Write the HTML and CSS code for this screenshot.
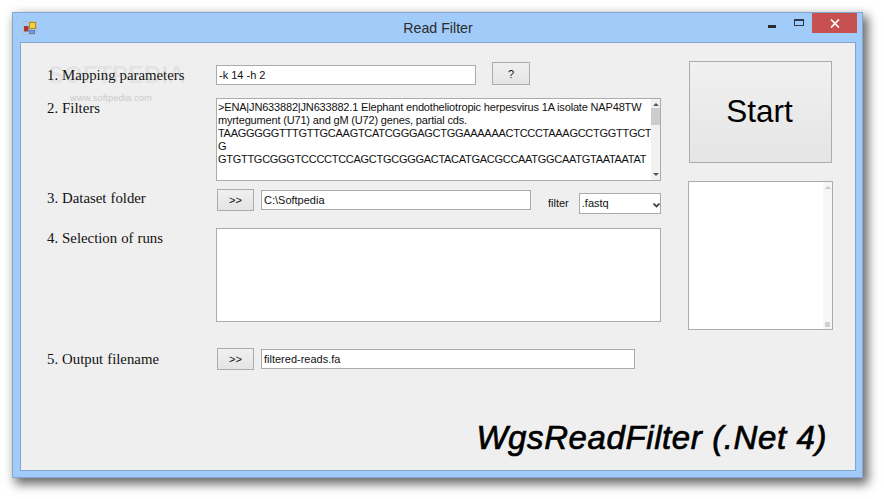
FILE: index.html
```html
<!DOCTYPE html>
<html lang="en">
<head>
    <meta charset="UTF-8">
    <title>Read Filter</title>
    <link rel="stylesheet" href="styles.css">
</head>
<body>

    <div class="window">
        <!-- Title bar -->
        <div class="titlebar">
            <svg class="app-icon" width="14" height="14" viewBox="0 0 14 14">
                <path d="M0.5 13.5 V0.5 H13.5 V13.5 Z" fill="none" stroke="#b4bcc6"/>
                <rect x="1.5" y="5.5" width="3.5" height="4.5" fill="#d42020" stroke="#8a4a40"/>
                <rect x="6.5" y="1.5" width="6" height="6" fill="#f6cf3c" stroke="#b08a20"/>
                <rect x="6.5" y="9.5" width="5" height="3" fill="#6f9fe0" stroke="#5a80b8"/>
            </svg>
            <span class="title">Read Filter</span>
            <div class="win-buttons">
                <div class="win-btn min"><span class="min-bar"></span></div>
                <div class="win-btn max"><span class="max-box"></span></div>
                <div class="win-btn close">
                    <svg width="10" height="9" viewBox="0 0 10 9">
                        <path d="M1 0.5 L9 8.5 M9 0.5 L1 8.5" stroke="#fff" stroke-width="1.7"/>
                    </svg>
                </div>
            </div>
        </div>

        <!-- Form area -->
        <div class="client">
            <div class="watermark">
                <span class="wm-big">SOFTPEDIA</span>
                <span class="wm-small">www.softpedia.com</span>
            </div>

            <div class="columns">
                <div class="form">
                    <div class="row row-params">
                        <label class="label">1. Mapping parameters</label>
                        <div class="field field-params">-k 14 -h 2</div>
                        <button class="btn btn-help">?</button>
                    </div>

                    <div class="row row-filters">
                        <label class="label">2. Filters</label>
                        <div class="textbox box-filters">
                            <div class="textbox-text">
                                <div>&gt;ENA|JN633882|JN633882.1 Elephant endotheliotropic herpesvirus 1A isolate NAP48TW</div>
                                <div>myrtegument (U71) and gM (U72) genes, partial cds.</div>
                                <div class="seq">TAAGGGGGTTTGTTGCAAGTCATCGGGAGCTGGAAAAAACTCCCTAAAGCCTGGTTGCT</div>
                                <div class="seq">G</div>
                                <div class="seq">GTGTTGCGGGTCCCCTCCAGCTGCGGGACTACATGACGCCAATGGCAATGTAATAATAT</div>
                            </div>
                            <div class="scrollbar">
                                <span class="arrow up"></span>
                                <span class="thumb"></span>
                                <span class="arrow down"></span>
                            </div>
                        </div>
                    </div>

                    <div class="row row-dataset">
                        <label class="label">3. Dataset folder</label>
                        <button class="btn btn-browse">&gt;&gt;</button>
                        <div class="field field-folder">C:\Softpedia</div>
                        <span class="filter-label">filter</span>
                        <div class="select">
                            <span>.fastq</span>
                            <svg width="7" height="5" viewBox="0 0 7 5">
                                <path d="M0.5 0.5 L3.5 3.5 L6.5 0.5" fill="none" stroke="#444" stroke-width="1.8"/>
                            </svg>
                        </div>
                    </div>

                    <div class="row row-runs">
                        <label class="label">4. Selection of runs</label>
                        <div class="textbox box-runs"></div>
                    </div>

                    <div class="row row-output">
                        <label class="label">5. Output filename</label>
                        <button class="btn btn-browse">&gt;&gt;</button>
                        <div class="field field-output">filtered-reads.fa</div>
                    </div>
                </div>

                <div class="side">
                    <button class="btn-start">Start</button>
                    <div class="textbox box-log">
                        <div class="scrollbar scrollbar-off">
                            <span class="arrow up"></span>
                            <span class="grip"></span>
                        </div>
                    </div>
                </div>
            </div>

            <div class="brand">WgsReadFilter (.Net 4)</div>
        </div>
    </div>

</body>
</html>
```

FILE: styles.css
```css
body {
    margin: 0;
    width: 884px;
    height: 499px;
    overflow: hidden;
    background-color: #ffffff;
    font-family: 'Liberation Sans', Arial, sans-serif;
    padding: 12px 0 0 12px;
    box-sizing: border-box;
}

/* Window frame */
.window {
    width: 851px;
    height: 466px;
    box-sizing: border-box;
    background-color: #a1cbf8;
    border: 1px solid #84a7d0;
    box-shadow: 4px 5px 10px 1px rgba(0, 0, 0, 0.6);
    padding: 0 6px 6px 7px;
    display: flex;
    flex-direction: column;
}

/* Title bar */
.titlebar {
    height: 29px;
    flex: none;
    display: flex;
    align-items: center;
    position: relative;
}

.app-icon {
    margin: 0 0 0 3px;
}

.title {
    position: absolute;
    left: 0;
    right: 0;
    top: 7px;
    text-align: center;
    font-size: 14.2px;
    color: #2c2c2c;
}

.win-buttons {
    margin-left: auto;
    align-self: flex-start;
    display: flex;
    margin-right: -1px;
    position: relative;
}

.win-btn {
    height: 20px;
    display: flex;
    justify-content: center;
}

.min {
    width: 26px;
    padding-right: 2px;
    box-sizing: border-box;
}

.min-bar {
    width: 8px;
    height: 3px;
    margin-top: 12px;
    background-color: #2a2a2a;
}

.max {
    width: 26px;
}

.max-box {
    width: 8px;
    height: 4px;
    margin-top: 6px;
    border: 1px solid #2a3a50;
    border-top-width: 2px;
    box-sizing: content-box;
}

.close {
    width: 45px;
    background-color: #c75050;
    align-items: center;
}

/* Client area */
.client {
    flex: 1;
    position: relative;
    background-color: #efefef;
    border: 1px solid #84a7d0;
    padding: 19px 0 0 26px;
    box-sizing: border-box;
    display: flex;
    flex-direction: column;
}

.columns {
    display: flex;
}

.form {
    width: 614px;
    flex: none;
}

.row {
    display: flex;
    align-items: flex-start;
}

.row-filters { margin-top: 13px; }
.row-dataset { margin-top: 8px; height: 25px; }
.row-runs { margin-top: 14px; }
.row-output { margin-top: 26px; }

.label {
    width: 169px;
    flex: none;
    font-family: 'Liberation Serif', 'Times New Roman', serif;
    font-size: 14.8px;
    word-spacing: 0.3px;
    color: #111111;
    margin-top: 5px;
}

.row-filters .label { margin-top: 2px; }
.row-dataset .label { margin-top: 1px; }
.row-runs .label { margin-top: 2px; }
.row-output .label { margin-top: 3px; }

/* Inputs */
.field {
    height: 20px;
    flex: none;
    box-sizing: border-box;
    background-color: #ffffff;
    border: 1px solid #ababab;
    font-size: 11px;
    line-height: 18px;
    padding-left: 2px;
    color: #111111;
    white-space: nowrap;
}

.field-params { width: 260px; margin-top: 3px; }
.field-folder { width: 270px; margin: 1px 0 0 7px; }
.field-output { width: 374px; margin: 1px 0 0 7px; }

.btn {
    flex: none;
    background-color: #e6e6e6;
    background-image: linear-gradient(#f0f0f0, #e4e4e4);
    border: 1px solid #acacac;
    padding: 0;
    font-family: 'Liberation Sans', Arial, sans-serif;
    font-size: 11px;
    color: #111111;
}

.btn-help {
    width: 38px;
    height: 23px;
    margin-left: 16px;
}

.btn-browse {
    width: 37px;
    height: 22px;
    margin-left: 1px;
}

.filter-label {
    font-size: 11px;
    color: #111111;
    margin: 8px 0 0 17px;
}

.select {
    width: 82px;
    height: 21px;
    flex: none;
    box-sizing: border-box;
    margin: 4px 0 0 10px;
    background-color: #ffffff;
    border: 1px solid #ababab;
    font-size: 11px;
    padding: 3px 0 0 2px;
    display: flex;
    justify-content: space-between;
    color: #111111;
}

.select svg {
    margin-top: 6px;
}

/* Multi line boxes */
.textbox {
    box-sizing: border-box;
    background-color: #ffffff;
    border: 1px solid #ababab;
    display: flex;
}

.box-filters { width: 445px; height: 83px; }
.box-runs { width: 445px; height: 94px; }
.box-log { width: 145px; height: 149px; margin: 18px 0 0 -1px; }

.textbox-text {
    flex: 1;
    min-width: 0;
    font-size: 11px;
    line-height: 13px;
    letter-spacing: -0.17px;
    padding: 2px 0 0 1px;
    color: #111111;
    white-space: nowrap;
    overflow: hidden;
}

.seq {
    letter-spacing: -0.28px;
}

.scrollbar {
    width: 9px;
    flex: none;
    margin-left: auto;
    background-color: #f1f1f1;
    display: flex;
    flex-direction: column;
    align-items: center;
    padding: 4px 0;
    box-sizing: border-box;
}

.arrow {
    width: 0;
    height: 0;
    border-left: 3px solid transparent;
    border-right: 3px solid transparent;
}

.arrow.up { border-bottom: 3px solid #555555; }
.arrow.down { border-top: 3px solid #555555; margin-top: auto; }

.thumb {
    width: 9px;
    height: 17px;
    margin-top: 2px;
    background-color: #cdcdcd;
}

.scrollbar-off {
    background-color: #f6f6f6;
}

.scrollbar-off .arrow.up { border-bottom-color: #c8c8c8; }

.grip {
    width: 5px;
    height: 5px;
    margin-top: auto;
    margin-bottom: -2px;
    background-color: #d0d0d0;
}

/* Right side */
.side {
    margin: -1px 0 0 28px;
    display: flex;
    flex-direction: column;
    width: 145px;
}

.btn-start {
    width: 143px;
    height: 102px;
    background-image: linear-gradient(#f0f0f0, #e5e5e5);
    border: 1px solid #acacac;
    padding: 0 2px 2px 0;
    font-family: 'Liberation Sans', Arial, sans-serif;
    font-size: 31.5px;
    color: #000000;
}

.brand {
    margin: auto 28px 13px 0;
    text-align: right;
    font-size: 33px;
    letter-spacing: 0.6px;
    font-style: italic;
    -webkit-text-stroke: 0.7px #000000;
    color: #000000;
}

/* Softpedia watermark, sits over the form */
.watermark {
    position: absolute;
    left: 27px;
    top: 18px;
    display: flex;
    flex-direction: column;
    pointer-events: none;
    color: rgba(120, 120, 120, 0.1);
}

.wm-big {
    font-size: 24px;
    font-weight: bold;
}

.wm-small {
    font-size: 9.5px;
    margin: 3px 0 0 22px;
    color: rgba(120, 120, 120, 0.35);
}
```
